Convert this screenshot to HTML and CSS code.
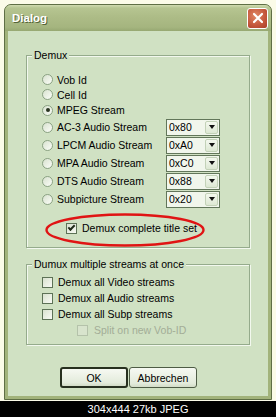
FILE: index.html
```html
<!doctype html>
<html lang="de">
	<head>
		<meta charset="utf-8">
		<title>Dialog</title>
		<link rel="stylesheet" href="styles.css">
	</head>
	<body>
		<div class="shot">
			<div class="window">
				<div class="titlebar">
					<span class="title">Dialog</span>
					<span class="close">
						<svg width="12" height="12" viewBox="0 0 12 12"><path d="M2 2 L10 10 M10 2 L2 10" stroke="#fff" stroke-width="2.2" stroke-linecap="round"/></svg>
					</span>
				</div>
				<div class="client">
					<div class="group demux">
						<span class="group-title">Demux</span>
						<div class="row r15"><span class="radio"></span>Vob Id</div>
						<div class="row r15"><span class="radio"></span>Cell Id</div>
						<div class="row"><span class="radio on"></span>MPEG Stream</div>
						<div class="row combo-row"><span class="radio"></span><span class="label">AC-3 Audio Stream</span><span class="combo"><span class="val">0x80</span><span class="drop"></span></span></div>
						<div class="row combo-row"><span class="radio"></span><span class="label">LPCM Audio Stream</span><span class="combo"><span class="val">0xA0</span><span class="drop"></span></span></div>
						<div class="row combo-row"><span class="radio"></span><span class="label">MPA Audio Stream</span><span class="combo"><span class="val">0xC0</span><span class="drop"></span></span></div>
						<div class="row combo-row"><span class="radio"></span><span class="label">DTS Audio Stream</span><span class="combo"><span class="val">0x88</span><span class="drop"></span></span></div>
						<div class="row combo-row"><span class="radio"></span><span class="label">Subpicture Stream</span><span class="combo"><span class="val">0x20</span><span class="drop"></span></span></div>
						<div class="row title-set"><span class="check on"></span>Demux complete title set</div>
						<svg class="ellipse" width="160" height="34" viewBox="0 0 160 34"><ellipse cx="80" cy="17" rx="78.5" ry="15.5" fill="none" stroke="#e01414" stroke-width="2.4"/></svg>
					</div>

					<div class="group multi">
						<span class="group-title">Dumux multiple streams at once</span>
						<div class="row"><span class="check"></span>Demux all Video streams</div>
						<div class="row"><span class="check"></span>Demux all Audio streams</div>
						<div class="row"><span class="check"></span>Demux all Subp streams</div>
						<div class="row split disabled"><span class="check"></span>Split on new Vob-ID</div>
					</div>

					<div class="buttons">
						<button class="default">OK</button>
						<button>Abbrechen</button>
					</div>
				</div>
			</div>
		</div>
		<div class="caption">304x444 27kb JPEG</div>
	</body>
</html>
```
FILE: styles.css
```css
html, body {
	margin: 0;
}

body {
	width: 276px;
	height: 417px;
	overflow: hidden;
	background-color: #000;
	font-family: "Liberation Sans", Arial, sans-serif;
	font-size: 10.5px;
	color: #000;
}

.shot {
	box-sizing: border-box;
	height: 401px;
	padding: 4px 4px 0 4px;
	background-color: #fbfbe8;
}

.window {
	box-sizing: border-box;
	height: 396px;
	display: flex;
	flex-direction: column;
	border: 1px solid #5f6f45;
	border-radius: 7px 7px 0 0;
	overflow: hidden;
	background-color: #a2b37b;
}

.titlebar {
	height: 26px;
	flex: none;
	display: flex;
	align-items: center;
	justify-content: space-between;
	padding: 0 3px 0 7px;
	background: linear-gradient(#d0dbb0 0, #b6c591 3px, #adbc87 45%, #a5b57f 85%, #97a872 100%);
}

.title {
	font-size: 11.5px;
	font-weight: bold;
	color: #fff;
	text-shadow: 1px 1px 0 #56653a;
}

.close {
	width: 19px;
	height: 19px;
	display: flex;
	align-items: center;
	justify-content: center;
	border: 1px solid #fff;
	border-radius: 3px;
	background: radial-gradient(circle at 40% 35%, #e08866, #c4553a 60%, #a8402a);
}

.client {
	flex: 1;
	margin: 0 3px 3px 3px;
	background-color: #d0e1c3;
	display: flex;
	flex-direction: column;
}

.group {
	position: relative;
	box-sizing: border-box;
	width: 224px;
	margin-left: 18px;
	border: 1px solid #95ab8c;
	box-shadow: 1px 1px 0 #f2f8ee, inset 1px 1px 0 #f2f8ee;
}

.group-title {
	position: absolute;
	top: -7px;
	left: 5px;
	padding: 0 2px;
	line-height: 13px;
	background-color: #d0e1c3;
}

.demux {
	margin-top: 24px;
	height: 193px;
	padding-top: 16px;
}

.multi {
	margin-top: 16px;
	height: 81px;
	padding-top: 9px;
}

.row {
	height: 16px;
	display: flex;
	align-items: center;
	padding-left: 15px;
}

.r15 {
	height: 15px;
}

.combo-row {
	height: 18px;
}

.radio {
	box-sizing: border-box;
	width: 11px;
	height: 11px;
	margin-right: 4px;
	border: 1px solid #8ba283;
	border-radius: 50%;
	background: linear-gradient(135deg, #d8e2cf, #fbfdf8);
	display: flex;
	align-items: center;
	justify-content: center;
}

.radio.on::after {
	content: "";
	width: 4px;
	height: 4px;
	border-radius: 50%;
	background-color: #2a3522;
}

.label {
	width: 109px;
}

.combo {
	box-sizing: border-box;
	width: 54px;
	height: 17px;
	display: flex;
	align-items: center;
	border: 1px solid #62765a;
	background-color: #f1f6ec;
}

.val {
	flex: 1;
	padding-left: 2px;
}

.drop {
	box-sizing: border-box;
	width: 13px;
	height: 13px;
	margin-right: 1px;
	border: 1px solid #c3d2b8;
	border-radius: 2px;
	background: linear-gradient(#f4f8ef, #dde8d3);
	display: flex;
	align-items: center;
	justify-content: center;
}

.drop::after {
	content: "";
	border-left: 3.5px solid transparent;
	border-right: 3.5px solid transparent;
	border-top: 4px solid #111;
}

.check {
	box-sizing: border-box;
	width: 11px;
	height: 11px;
	margin-right: 5px;
	border: 1px solid #5d7256;
	background: linear-gradient(135deg, #d9e2cf, #f8faf4);
	display: flex;
	align-items: center;
	justify-content: center;
}

.check.on::after {
	content: "";
	width: 5px;
	height: 2px;
	margin-top: -2px;
	border-left: 2px solid #1f2a18;
	border-bottom: 2px solid #1f2a18;
	transform: rotate(-45deg);
}

.title-set {
	margin-top: 12px;
	padding-left: 39px;
}

.ellipse {
	position: absolute;
	left: 18px;
	top: 157px;
}

.split {
	padding-left: 50px;
}

.split .check {
	margin-right: 6px;
	border-color: #b4c2aa;
	background: #d8e4cd;
}

.disabled {
	color: #a3ad97;
}

.buttons {
	display: flex;
	gap: 1px;
	margin: 22px 0 0 52px;
}

button {
	box-sizing: border-box;
	width: 68px;
	height: 21px;
	padding: 0;
	font: inherit;
	color: #000;
	border: 1px solid #4e5c45;
	border-radius: 3px;
	background: linear-gradient(#f6f9f2, #e3ebdb 80%, #d2dcc7);
}

button.default {
	border: 2px solid #27301f;
}

.caption {
	height: 16px;
	line-height: 16px;
	text-align: center;
	color: #fff;
	font-size: 11px;
}
```
